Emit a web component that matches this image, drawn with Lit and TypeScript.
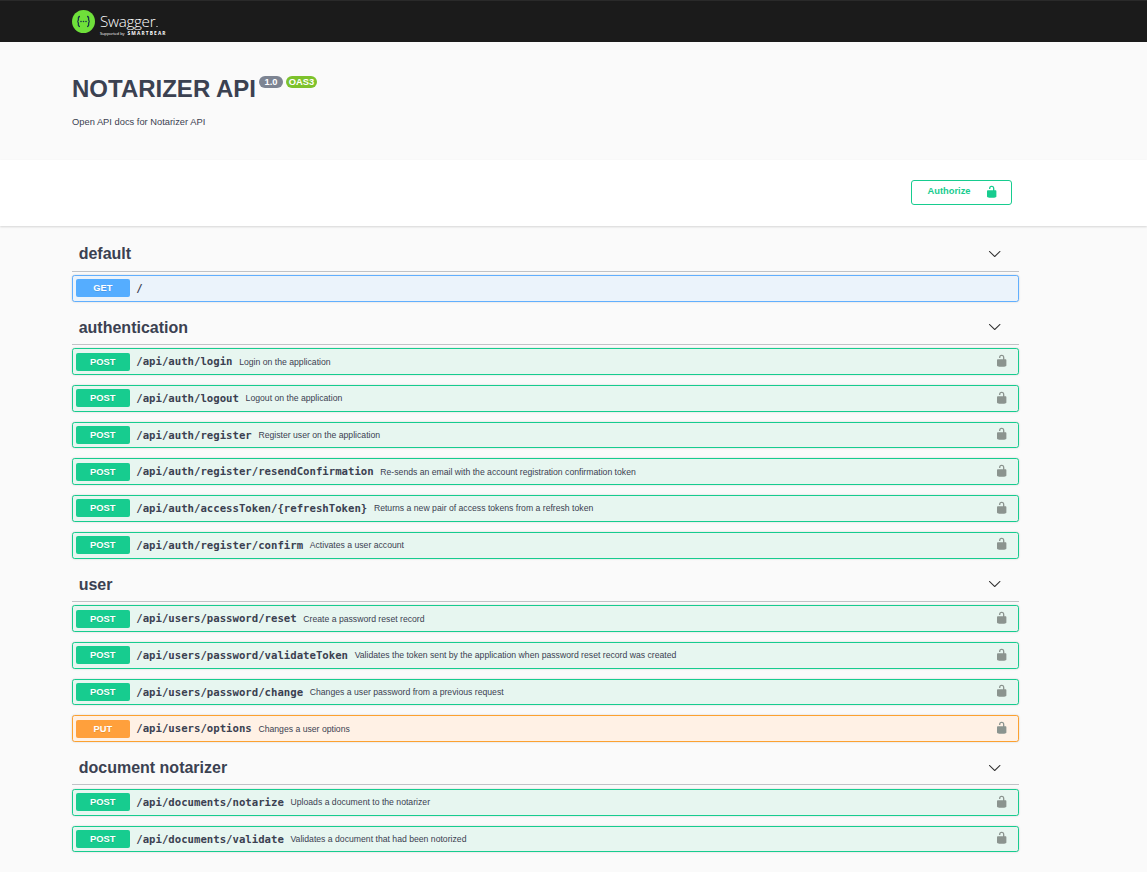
import { LitElement, html, css, svg } from "lit";
import { customElement } from "lit/decorators.js";

type Op = { m: string; p: string; d?: string };
const sections: { t: string; ops: Op[] }[] = [
  { t: "default", ops: [{ m: "get", p: "/" }] },
  {
    t: "authentication",
    ops: [
      { m: "post", p: "/api/auth/login", d: "Login on the application" },
      { m: "post", p: "/api/auth/logout", d: "Logout on the application" },
      { m: "post", p: "/api/auth/register", d: "Register user on the application" },
      { m: "post", p: "/api/auth/register/resendConfirmation", d: "Re-sends an email with the account registration confirmation token" },
      { m: "post", p: "/api/auth/accessToken/{refreshToken}", d: "Returns a new pair of access tokens from a refresh token" },
      { m: "post", p: "/api/auth/register/confirm", d: "Activates a user account" },
    ],
  },
  {
    t: "user",
    ops: [
      { m: "post", p: "/api/users/password/reset", d: "Create a password reset record" },
      { m: "post", p: "/api/users/password/validateToken", d: "Validates the token sent by the application when password reset record was created" },
      { m: "post", p: "/api/users/password/change", d: "Changes a user password from a previous request" },
      { m: "put", p: "/api/users/options", d: "Changes a user options" },
    ],
  },
  {
    t: "document notarizer",
    ops: [
      { m: "post", p: "/api/documents/notarize", d: "Uploads a document to the notarizer" },
      { m: "post", p: "/api/documents/validate", d: "Validates a document that had been notorized" },
    ],
  },
];

const lock = svg`<path d="M15.8 8H14V5.6C14 2.703 12.665 1 10 1 7.334 1 6 2.703 6 5.6V6h2v-.801C8 3.754 8.797 3 10 3c1.203 0 2 .754 2 2.199V8H4c-.553 0-1 .646-1 1.199V17c0 .549.428 1.139.951 1.307l1.197.387C5.672 18.861 6.55 19 7.1 19h5.8c.549 0 1.428-.139 1.951-.307l1.196-.387c.524-.167.953-.757.953-1.306V9.199C17 8.646 16.352 8 15.8 8z"/>`;
const arrow = svg`<path d="M17.418 6.109c.272-.268.709-.268.979 0s.271.701 0 .969l-7.908 7.83c-.27.268-.707.268-.979 0l-7.908-7.83c-.27-.268-.27-.701 0-.969.271-.268.709-.268.979 0L10 13.25l7.418-7.141z"/>`;

@customElement("app-root")
export class AppRoot extends LitElement {
  static styles = css`
    :host { display: block; min-height: 872px; background: #fafafa; font-family: "Liberation Sans", Arial, sans-serif; color: #3b4151; }
    .topbar { height: 42px; box-sizing: border-box; background: #1b1b1b; border-top: 1px solid #2a2a2a; display: flex; align-items: center; padding-left: 72px; }
    .logo { display: flex; align-items: center; gap: 5px; }
    .logo-text { display: flex; flex-direction: column; color: #fff; font-family: "Open Sans", sans-serif; padding-top: 3px; }
    .brand { font-size: 15.2px; line-height: 20px; height: 20px; letter-spacing: -0.3px; font-weight: 300; display: flex; align-items: baseline; gap: 1px; }
    .tm { width: 2px; height: 1px; background: #8a8a8a; }
    .support { font-size: 3.9px; line-height: 5px; height: 5px; white-space: nowrap; display: flex; align-items: baseline; gap: 3px; }
    .support b { font-size: 4.8px; letter-spacing: 1.15px; font-weight: 700; }
    .info { height: 118px; box-sizing: border-box; padding: 33.5px 0 0 72px; }
    .title { display: flex; align-items: flex-start; margin: 0; font-size: 24px; line-height: 26px; font-weight: 700; color: #3b4151; }
    .badge { font-size: 9.33px; line-height: 12px; height: 12px; font-weight: 700; color: #fff; border-radius: 7px; margin-left: 3px; margin-top: 0.5px; }
    .ver { background: #7d8492; padding: 0 5.6px; }
    .oas { background: #7dc22c; padding: 0 2.7px; }
    .desc { margin: 14.2px 0 0; font-size: 9.33px; line-height: 13px; color: #3b4151; }
    .scheme { height: 66px; box-sizing: border-box; background: #fff; box-shadow: 0 1px 2px rgba(0, 0, 0, 0.15); padding: 20px 135px 0 0; display: flex; justify-content: flex-end; }
    .auth { width: 101px; height: 25px; box-sizing: border-box; border: 1px solid #17cc8f; border-radius: 3px; display: flex; align-items: center; gap: 14px; color: #17cc8f; font-size: 9.33px; font-weight: 700; padding: 0 0 3px 15.5px; }
    .auth svg { width: 13.4px; height: 13.4px; fill: currentColor; margin-bottom: -1px; }
    .main { width: 947px; margin: 12.57px 0 0 72px; }
    .head { height: 33.23px; box-sizing: border-box; border-bottom: 1px solid rgba(59, 65, 81, 0.3); margin-bottom: 3.7px; padding: 0 17.5px 1px 6.7px; display: flex; align-items: center; justify-content: space-between; }
    .head h3 { margin: 1.1px 0 0; font-size: 16px; font-weight: 700; color: #3b4151; }
    .head:first-child h3 { margin: 0; }
    .head svg { width: 13.4px; height: 13.4px; fill: #303030; }
    .op { height: 26.7px; box-sizing: border-box; margin-bottom: 10px; border: 1px solid; border-radius: 2.7px; box-shadow: 0 0 2px rgba(0, 0, 0, 0.19); display: flex; align-items: center; padding: 0 10px 0 3px; }
    .op.get { height: 26.5px; margin-bottom: 9.5px; padding-bottom: 1px; border-color: #61affe; background: #ebf3fb; }
    .post { border-color: #17cc8f; background: #e7f6f0; }
    .put { border-color: #fca130; background: #fff1e5; }
    .method { flex: none; width: 53.6px; height: 18px; border-radius: 2px; color: #fff; font-size: 9.33px; font-weight: 700; text-align: center; line-height: 18px; text-shadow: 0 1px 0 rgba(0, 0, 0, 0.1); }
    .get .method { background: #55adff; }
    .post .method { background: #17cc8f; }
    .put .method { background: #ffa03c; }
    .path { padding: 0 6.67px; font-family: "DejaVu Sans Mono", monospace; font-size: 10.67px; font-weight: 700; color: #3b4151; }
    .d { flex: 1; font-size: 8.67px; color: #3b4151; }
    .op svg { width: 13.4px; height: 13.4px; fill: #8b948f; flex: none; margin-bottom: 2px; }
  `;

  render() {
    return html`
      <div class="topbar">
        <div class="logo">
          <svg width="23" height="23" viewBox="0 0 23 23">
            <circle cx="11.5" cy="11.5" r="11.5" fill="#6fe03a"></circle>
            <path d="M8 6.5c-2 0-1.6 1.6-1.6 3 0 1.3-.6 2-1.2 2 .6 0 1.2.7 1.2 2 0 1.4-.4 3 1.600 3M15 6.500c2 0 1.600 1.600 1.600 3 0 1.300.6 2 1.200 2-.6 0-1.200.7-1.200 2 0 1.400.4 3-1.600 3" fill="none" stroke="#173646" stroke-width="1.300"></path>
            <circle cx="9" cy="11.500" r=".8" fill="#173646"></circle>
            <circle cx="11.500" cy="11.500" r=".8" fill="#173646"></circle>
            <circle cx="14" cy="11.500" r=".8" fill="#173646"></circle>
          </svg>
          <div class="logo-text">
            <span class="brand">Swagger<i class="tm"></i></span>
            <span class="support">Supported by <b>SMARTBEAR</b></span>
          </div>
        </div>
      </div>
      <div class="info">
        <h2 class="title">NOTARIZER API<span class="badge ver">1.0</span><span class="badge oas">OAS3</span></h2>
        <p class="desc">Open API docs for Notarizer API</p>
      </div>
      <div class="scheme">
        <div class="auth"><span>Authorize</span><svg viewBox="0 0 20 20">${lock}</svg></div>
      </div>
      <div class="main">
        ${sections.map(
          (s) => html`
            <div class="head"><h3>${s.t}</h3><svg viewBox="0 0 20 20">${arrow}</svg></div>
            ${s.ops.map(
              (o) => html`
                <div class="op ${o.m}">
                  <span class="method">${o.m.toUpperCase()}</span>
                  <span class="path">${o.p}</span>
                  <span class="d">${o.d ?? ""}</span>
                  ${o.m === "get" ? "" : html`<svg viewBox="0 0 20 20">${lock}</svg>`}
                </div>
              `
            )}
          `
        )}
      </div>
    `;
  }
}
